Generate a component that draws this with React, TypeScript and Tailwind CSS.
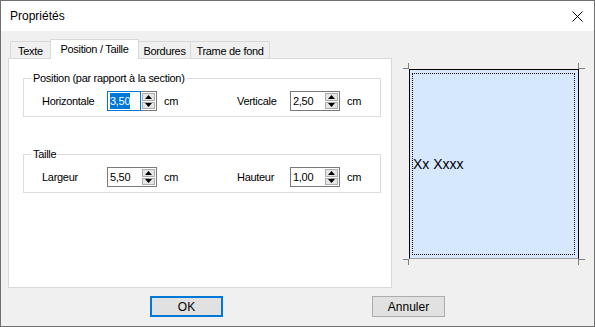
import React from 'react';

const Arrow = ({ up }: { up?: boolean }) => (
  <svg width="7" height="4" viewBox="0 0 7 4" className="block">
    {up ? <path d="M0 4 L3.5 0 L7 4 Z" fill="#000" /> : <path d="M0 0 L3.5 4 L7 0 Z" fill="#000" />}
  </svg>
);

const Spin = ({ value, focused }: { value: string; focused?: boolean }) => (
  <div className="flex h-[20px] w-[50px] shrink-0">
    <div
      className={`w-[34px] h-full border bg-white flex items-center pl-[2px] ${
        focused ? 'border-[#0078d7]' : 'border-[#7a7a7a] border-r-0'
      }`}
    >
      {focused ? (
        <span className="bg-[#0078d7] text-white leading-[16px]">{value}</span>
      ) : (
        <span className="leading-[16px]">{value}</span>
      )}
    </div>
    <div className="w-[16px] h-full border border-[#7a7a7a] border-l-0 bg-white p-px flex flex-col gap-px">
      <div className="flex-1 bg-[#e6e6e6] border border-[#adadad] flex items-center justify-center">
        <Arrow up />
      </div>
      <div className="flex-1 bg-[#e6e6e6] border border-[#adadad] flex items-center justify-center">
        <Arrow />
      </div>
    </div>
  </div>
);

const Row = (props: { l1: string; v1: string; l2: string; v2: string; focus?: boolean }) => (
  <div className="flex items-center h-[20px] pl-[18px]">
    <div className="w-[65px] shrink-0">{props.l1}</div>
    <Spin value={props.v1} focused={props.focus} />
    <div className="w-[80px] shrink-0 pl-[7px]">cm</div>
    <div className="w-[53px] shrink-0">{props.l2}</div>
    <Spin value={props.v2} />
    <div className="pl-[7px]">cm</div>
  </div>
);

const Corner = ({ className }: { className: string }) => (
  <span className={`absolute bg-[#808080] ${className}`} />
);

export default function App() {
  return (
    <div className="w-[595px] h-[327px] border border-[#707070] bg-[#f0f0f0] flex flex-col font-['Liberation_Sans',Arial,sans-serif] text-[11px] tracking-[-0.3px] text-black overflow-hidden">
      {/* Title bar */}
      <div className="h-[30px] bg-white flex items-center justify-between pl-[9px] pr-[11px]">
        <span className="text-[12px] tracking-normal">Propriétés</span>
        <svg width="11" height="11" viewBox="0 0 11 11">
          <path d="M0.5 0.5 L10.5 10.5 M10.5 0.5 L0.5 10.5" stroke="#000" strokeWidth="1" />
        </svg>
      </div>

      <div className="flex-1 flex flex-col">
        <div className="flex pt-[8px] pl-[7px]">
          {/* Tabs + panel */}
          <div className="w-[384px] flex flex-col">
            <div className="h-[20px] flex items-end pl-[2px] relative z-10">
              <div className="w-[40px] h-[17px] mb-px border-l border-t border-[#d9d9d9] flex items-center justify-center pt-[2px]">
                Texte
              </div>
              <div className="w-[89px] h-[20px] bg-white border-l border-t border-r border-[#d9d9d9] flex items-center justify-center">
                Position / Taille
              </div>
              <div className="w-[52px] h-[17px] mb-px border-t border-r border-[#d9d9d9] flex items-center justify-center pt-[2px]">
                Bordures
              </div>
              <div className="w-[79px] h-[17px] mb-px border-t border-r border-[#d9d9d9] flex items-center justify-center pt-[2px]">
                Trame de fond
              </div>
            </div>
            <div className="h-[230px] -mt-px border border-[#d9d9d9] bg-white pl-[14px] pt-[13px]">
              <fieldset className="w-[358px] border border-[#dcdcdc] pb-[5px]">
                <legend className="ml-[7px] px-[2px] leading-[13px]">Position (par rapport à la section)</legend>
                <div className="mt-[6px]">
                  <Row l1="Horizontale" v1="3,50" l2="Verticale" v2="2,50" focus />
                </div>
              </fieldset>
              <fieldset className="w-[358px] mt-[31px] border border-[#dcdcdc] pb-[5px]">
                <legend className="ml-[7px] px-[2px] leading-[13px]">Taille</legend>
                <div className="mt-[6px]">
                  <Row l1="Largeur" v1="5,50" l2="Hauteur" v2="1,00" />
                </div>
              </fieldset>
            </div>
          </div>

          {/* Preview */}
          <div className="ml-[11px] mt-[24px] w-[182px] h-[202px] relative p-[6px]">
            <Corner className="left-0 top-[5px] w-[6px] h-px" />
            <Corner className="left-[5px] top-0 w-px h-[6px]" />
            <Corner className="left-[175px] top-[5px] w-[7px] h-px" />
            <Corner className="left-[175px] top-0 w-px h-[6px]" />
            <Corner className="left-0 top-[196px] w-[6px] h-px" />
            <Corner className="left-[5px] top-[196px] w-px h-[6px]" />
            <Corner className="left-[175px] top-[196px] w-[7px] h-px" />
            <Corner className="left-[175px] top-[196px] w-px h-[6px]" />
            <div className="w-[170px] h-[190px] border border-black border-b-[#a0a0a0] bg-[#d5e8fe] p-[3px]">
              <div className="h-full border border-dotted border-black flex items-center text-[14px] tracking-normal -ml-px">
                Xx Xxxx
              </div>
            </div>
          </div>
        </div>

        {/* Buttons */}
        <div className="flex mt-[8px] pl-[149px]">
          <button className="w-[73px] h-[21px] border-2 border-[#0078d7] bg-[#e1e1e1] text-[12px] tracking-normal leading-none">
            OK
          </button>
          <button className="ml-[149px] w-[73px] h-[21px] border border-[#adadad] bg-[#e1e1e1] text-[12px] tracking-normal leading-none">
            Annuler
          </button>
        </div>
      </div>
    </div>
  );
}
